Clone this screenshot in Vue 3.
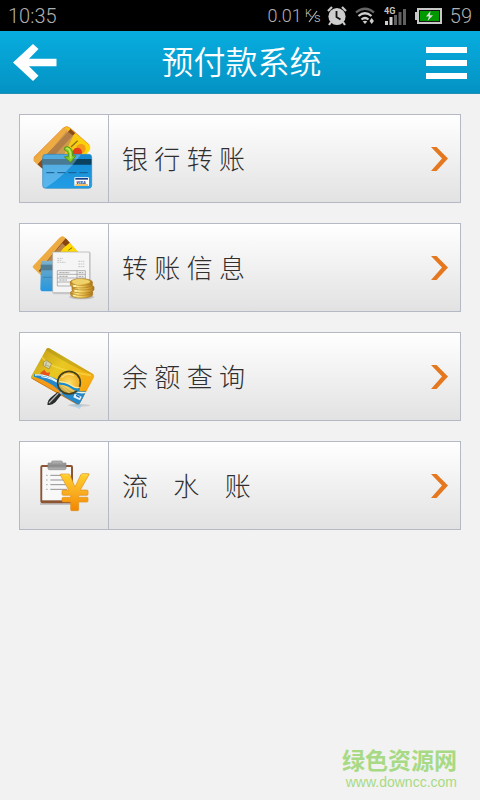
<script setup>
const items = [
  { id: 'transfer', label: '银 行 转 账' },
  { id: 'info', label: '转 账 信 息' },
  { id: 'balance', label: '余 额 查 询' },
  { id: 'ledger', label: '流\u00a0\u00a0\u00a0\u00a0水\u00a0\u00a0\u00a0\u00a0账' },
]
</script>

<template>
  <div class="screen">
    <div class="status">
      <span class="clock">10:35</span>
      <div class="indicators">
        <span class="speed">0.01</span>
        <svg class="unit" width="16" height="18" viewBox="0 0 16 18" aria-label="K/s">
          <text x="0" y="10" font-size="11">K</text>
          <path d="M4 15 12 4" stroke="#b8b8b8" stroke-width="1.2" />
          <text x="9" y="15" font-size="13">s</text>
        </svg>
        <svg class="alarm" width="20" height="20" viewBox="0 0 20 20">
          <path d="M1 5 5 1M19 5 15 1M4 16 2 19M16 16 18 19" stroke="#c9c9c9" stroke-width="2.2" />
          <circle cx="10" cy="10.5" r="8.6" fill="#cecece" />
          <path d="M9.5 5v6l4 2.5" fill="none" stroke="#111" stroke-width="1.8" />
        </svg>
        <svg class="wifi" width="20" height="18" viewBox="0 0 20 18">
          <path d="M1 5.5Q10-2 19 5.5" fill="none" stroke="#656565" stroke-width="2.2" />
          <path d="M3.5 9Q10 3.5 16.5 9M6.5 12.5Q10 9.5 13.5 12.5" fill="none" stroke="#cecece" stroke-width="2.2" />
          <path d="m7.700 14.500 2.300 2.500 2.300-2.500Q10 12.800 7.700 14.500Z" fill="#cecece" />
          <path d="m14.500 14 2.200-3 2.200 3-2.200 3z" fill="#cecece" />
        </svg>
        <svg class="signal" width="23" height="18" viewBox="0 0 23 18">
          <text x="0" y="7" font-size="9" font-weight="700">4G</text>
          <path d="M1 14h3v4H1zM5.500 10h3v8h-3z" fill="#cecece" />
          <path d="M10 8h3v10h-3zM14.500 5h3v13h-3zM19 2h3v16h-3z" fill="#606060" />
        </svg>
        <svg class="battery" width="27" height="16" viewBox="0 0 27 16">
          <path d="M0 4h3v8H0z" fill="#c8c8c8" />
          <rect x="3" y="1" width="23" height="14" fill="#090" stroke="#c8c8c8" stroke-width="2" />
          <rect x="4.500" y="2.500" width="20" height="11" fill="none" stroke="#151515" />
          <path d="m15.500 3-4.500 5.500h3L12.500 13 18 7.200h-3.200z" fill="#ddd" />
        </svg>
        <span class="level">59</span>
      </div>
    </div>

    <header class="header">
      <button class="back" type="button" aria-label="返回">
        <svg width="44" height="38" viewBox="0 0 44 38">
          <path d="M0 18.500 20 0l5.500 5L16 14.700h27.500v7.500H16l9.500 9.600-5.500 5.200z" fill="#fff" />
        </svg>
      </button>
      <h1>预付款系统</h1>
      <button class="menu" type="button" aria-label="菜单">
        <span></span><span></span><span></span>
      </button>
    </header>

    <main class="list">
      <a v-for="item in items" :key="item.id" class="item" href="#">
        <span class="icon">
          <svg v-if="item.id === 'transfer'" width="88" height="87" viewBox="30 30 264 261">
            <defs>
              <linearGradient id="gold" x1="0" y1="0.5" x2="1" y2="0.5">
                <stop offset="0" stop-color="#e89a3a" /><stop offset="0.45" stop-color="#e5ae62" /><stop offset="0.55" stop-color="#f6c21c" /><stop offset="1" stop-color="#ffdc00" />
              </linearGradient>
              <linearGradient id="blue" x1="0" y1="0" x2="0" y2="1">
                <stop offset="0" stop-color="#1488cf" /><stop offset="1" stop-color="#229ee6" />
              </linearGradient>
              <clipPath id="goldClip"><path d="M72 157 160 69Q170 60 180 69L238 120Q245 128 238 137L180 205 98 192 72 169Q68 163 72 157Z" /></clipPath>
              <clipPath id="blueClip"><rect x="98" y="148" width="147" height="102" rx="9" /></clipPath>
            </defs>
            <g clip-path="url(#goldClip)">
              <path d="M60 55h195v155H60z" fill="url(#gold)" />
              <path d="m67 167 96-100 12 10-88 105z" fill="#efab43" />
              <path d="m80 181 90-96 14-16 14 13-105 113z" fill="#8d4c17" />
              <path d="m112 148 58-70 20 14-28 58z" fill="#c08f55" opacity=".75" />
              <path d="m183 126 20-19" stroke="#8d741a" stroke-width="4" />
              <circle cx="213" cy="131" r="14" fill="#f39a18" />
              <circle cx="202" cy="142" r="14" fill="#e53b1c" />
            </g>
            <path d="M72 157 160 69Q170 60 180 69L238 120" fill="none" stroke="#ed9c30" stroke-width="3" />
            <g clip-path="url(#blueClip)">
              <path d="M97 147h150v105H97z" fill="url(#blue)" />
              <path d="M97 162h150v17H97z" fill="#09415f" />
              <path d="M97 147h117Q170 208 105 250h-8z" fill="#c7eaff" opacity=".34" />
              <path d="M109 203h24m9 0h24m9 0h24m9 0h25" stroke="#175c8c" stroke-width="3" />
            </g>
            <rect x="98" y="148" width="147" height="102" rx="9" fill="none" stroke="#3189ba" stroke-width="2" />
            <rect x="193" y="217" width="44" height="26" rx="2" fill="#fff" />
            <path d="M196 219h38v5h-38z" fill="#183f8d" /><path d="M196 238h38v4h-38z" fill="#f0a11f" />
            <text x="199" y="237" font-size="13" font-weight="900" font-style="italic" fill="#263e91">VISA</text>
            <path d="M163 134Q162 124 172 125 190 128 188 153l10-1-16 20-19-16 12-1Q178 140 163 134Z" fill="#83cb26" stroke="#559715" stroke-width="3" />
            <path d="M168 131q5-3 10 4 5 8 4 26" fill="none" stroke="#bfe95c" stroke-width="5" />
          </svg>

          <svg v-else-if="item.id === 'info'" width="88" height="87" viewBox="30 27 264 261">
            <defs>
              <linearGradient id="cardBlue" x1="0" y1="0" x2="0" y2="1">
                <stop stop-color="#80b4ce" /><stop offset=".3" stop-color="#5da5cd" /><stop offset="1" stop-color="#2697de" />
              </linearGradient>
              <linearGradient id="coin" x1="0" y1="0" x2="1" y2="0">
                <stop stop-color="#bf8a26" /><stop offset=".3" stop-color="#ffe883" /><stop offset=".6" stop-color="#e8bd4c" /><stop offset="1" stop-color="#ad7718" />
              </linearGradient>
            </defs>
            <path d="m69 153 78-83q9-10 17-3l43 47-88 68H94l-23-22q-4-4-2-7Z" fill="#edab42" />
            <path d="m86 168 81-98 14 15-76 91z" fill="#854412" />
            <path d="m112 137 45-52 13 12-27 44z" fill="#c79557" opacity=".8" />
            <path d="m160 100 19-17 27 30h-57z" fill="#ffd900" />
            <path d="m175 106 11-8" stroke="#776b14" stroke-width="3" />
            <path d="M93 142q0-5 6-5h40v92h-39q-9 0-9-8z" fill="url(#cardBlue)" />
            <path d="M92 149h38v17H92z" fill="#4b7388" opacity=".8" />
            <path d="M99 187h28" stroke="#347aa0" stroke-width="2" />
            <path d="M130 113h112v125H130z" fill="#aaa" opacity=".5" />
            <path d="M128 111h111v122H128z" fill="#f5f5f5" stroke="#aaa" stroke-width="2" />
            <path d="M142 130h17m-17 6h12m-12 6h24m39-3h18m-18 8h18m-18 8h18" stroke="#aaa" stroke-width="2" stroke-dasharray="5 2" />
            <path d="M142 167h84v46h-84zM142 178h84m-84 11h84m-84 12h84M201 167v46" fill="none" stroke="#909090" stroke-width="2" />
            <path d="M148 173h30m-30 11h27m-27 11h23m35-22h14m-14 11h14" stroke="#777" stroke-width="2" stroke-dasharray="7 2" />
            <ellipse cx="215" cy="246" rx="37" ry="7" fill="#777" opacity=".35" />
            <g fill="url(#coin)" stroke="#ad7a20" stroke-width="2">
              <path d="M182 232v8c4 12 60 12 66 0v-8z" /><ellipse cx="215" cy="232" rx="33" ry="9" />
              <path d="M186 216v9c4 12 60 12 66 0v-9z" /><ellipse cx="219" cy="216" rx="33" ry="9" />
              <path d="M181 201v9c4 12 60 12 66 0v-9z" /><ellipse cx="214" cy="201" rx="33" ry="10" />
            </g>
            <ellipse cx="213" cy="200" rx="27" ry="7" fill="#efd269" />
            <path d="M194 210v6m3 9v5m-4 9v5" stroke="#fff2ac" stroke-width="8" />
          </svg>

          <svg v-else-if="item.id === 'balance'" width="88" height="87" viewBox="30 24 264 261">
            <defs>
              <linearGradient id="bank" x1="0" y1="0" x2="1" y2="1">
                <stop stop-color="#b98f16" /><stop offset=".4" stop-color="#e8c822" /><stop offset=".72" stop-color="#f6ac13" /><stop offset="1" stop-color="#f07b13" />
              </linearGradient>
              <radialGradient id="lens"><stop stop-color="#ffe16e" /><stop offset="1" stop-color="#efad24" stop-opacity=".75" /></radialGradient>
              <clipPath id="bankClip"><path d="M109 72q3-5 9-2l131 77q6 4 3 10l-42 78q-3 6-9 3L66 161q-5-3-2-8z" /></clipPath>
            </defs>
            <ellipse cx="207" cy="241" rx="34" ry="4" fill="#aaa" opacity=".45" />
            <path d="m178 238 31 15 9-15z" fill="#8ac8e6" opacity=".45" />
            <g clip-path="url(#bankClip)">
              <path d="M55 60h205v190H55z" fill="url(#bank)" />
              <path d="M104 73q80 53 144 76l5-12-125-75z" fill="#a99115" opacity=".45" />
              <path d="M90 88q17 28 50 39 42 15 103 24" fill="none" stroke="#f8e052" stroke-width="5" opacity=".6" />
              <path d="m91 143 12-9 7 9 10-1-4 15-20 2z" fill="#e95319" />
              <path d="M66 160q50-4 75 14 20 14 45 35l-20 22z" fill="#f39a18" />
              <path d="M72 148q42 0 67 14 31 21 52 32 18 8 38 4l-20 47-46-30Q132 172 72 155z" fill="#2588c9" />
              <path d="M75 150q34-2 62 16 34 23 53 32 19 8 39 4" fill="none" stroke="#eef5e6" stroke-width="4" />
              <path d="M94 155q35 4 57 25 14 13 29 25" fill="none" stroke="#fff" stroke-width="3" />
              <path d="m194 206 21 9-5 11-20-9z" fill="#e9f4fa" /><path d="m198 211 11 6" stroke="#176eb6" stroke-width="4" />
            </g>
            <path d="M64 159 202 238" stroke="#b96a18" stroke-width="2" />
            <path d="m100 112 9-6 16 10-8 16-17-10z" fill="#d6d4a8" stroke="#96832e" stroke-width="2" />
            <path d="M105 119l14 6m-9-15-4 13" stroke="#8e998b" stroke-width="2" />
            <path d="m146 212 12-14" stroke="#aab5bc" stroke-width="6" />
            <path d="m143 201 11 8-18 23q-11 10-24 7 0-15 16-26z" fill="#292b2a" />
            <path d="m145 205-20 21-8 8" stroke="#aeb3b0" stroke-width="4" fill="none" />
            <circle cx="177" cy="173" r="34" fill="url(#lens)" stroke="#44401e" stroke-width="5" />
            <path d="M146 176q21-2 39 11 10 9 24 7" fill="none" stroke="#168bd1" stroke-width="7" />
            <path d="M148 169q23 3 38 13 10 8 23 5" fill="none" stroke="#f7e89f" stroke-width="4" />
            <path d="M155 158q15-18 37-6" fill="none" stroke="#fff0a2" stroke-width="4" opacity=".7" />
          </svg>

          <svg v-else width="88" height="87" viewBox="30 21 264 261">
            <defs>
              <linearGradient id="yen" x1="0" y1="0" x2="0" y2="1">
                <stop stop-color="#ffd02b" /><stop offset=".5" stop-color="#faae20" /><stop offset="1" stop-color="#f28600" />
              </linearGradient>
              <linearGradient id="clip" x1="0" y1="0" x2="0" y2="1">
                <stop stop-color="#bababa" /><stop offset=".55" stop-color="#888" /><stop offset="1" stop-color="#bbb" />
              </linearGradient>
            </defs>
            <path d="M90 204h100v6H90z" fill="#999" opacity=".5" />
            <rect x="94" y="93" width="92" height="109" rx="3" fill="#f4f4f4" stroke="#8b5533" stroke-width="6" />
            <path d="M93 200h94" stroke="#8b5533" stroke-width="8" />
            <path d="M98 97h84v98H98z" fill="#f8f8f8" />
            <path d="M108 121h5m-5 14h5m-5 14h5m-5 14h5" stroke="#a9a9a9" stroke-width="3" />
            <path d="M121 121h50m-50 14h50m-50 14h50m-50 14h50" stroke="#929292" stroke-width="3" />
            <path d="M114 84h11v-3q0-3 3-3h26q3 0 3 3v3h11v16q0 4-5 4h-45q-4 0-4-4z" fill="url(#clip)" stroke="#858585" stroke-width="2" />
            <path d="M154 117h22q3 0 4 3l15 36 17-36q2-4 5-4h19q2 0 1 3l-26 46h20q3 0 3 3v10q0 3-3 3h-25v6h25q3 0 3 3v8q0 3-3 3h-25v23q0 3-3 3h-18q-3 0-3-3v-23h-22q-4 0-4-3v-8q0-3 4-3h22v-6h-22q-4 0-4-3v-10q0-3 4-3h16l-25-45q-1-3 2-3Z" fill="url(#yen)" stroke="#e08f1e" stroke-width="2" />
            <path d="M159 120h16m39 0h18" stroke="#ffe25d" stroke-width="2" />
          </svg>
        </span>
        <span class="label">{{ item.label }}</span>
        <svg class="chevron" width="18" height="26" viewBox="0 0 18 26">
          <path d="M0 1h5.500L17 12.500 5.500 25H0l11-12.500z" fill="#e5771f" />
        </svg>
      </a>
    </main>

    <footer class="brand">
      <strong>绿色资源网</strong>
      <span>www.downcc.com</span>
    </footer>
  </div>
</template>

<style>
body {
  background: #f2f2f2;
}
</style>

<style scoped>
.screen {
  display: flex;
  flex-direction: column;
  min-height: 100vh;
  background: #f2f2f2;
  font-family: Roboto, "Noto Sans CJK SC", sans-serif;
}
.status {
  display: flex;
  align-items: center;
  justify-content: space-between;
  height: 31px;
  padding: 0 8px;
  background: #000;
  color: #b0b0b0;
  font-size: 20px;
  font-weight: 350;
  line-height: 32px;
}
.status text {
  fill: #c4c4c4;
}
.indicators {
  display: flex;
  align-items: center;
}
.speed {
  font-size: 18px;
}
.unit {
  margin-left: 3px;
}
.alarm {
  margin-left: 6px;
}
.wifi {
  margin-left: 8px;
}
.signal {
  margin-left: 9px;
}
.battery {
  margin-left: 8px;
}
.level {
  margin-left: 8px;
}
.header {
  display: flex;
  align-items: center;
  justify-content: space-between;
  box-sizing: border-box;
  height: 63px;
  padding: 2px 13px 0;
  border-bottom: 1px solid #238fb4;
  background: linear-gradient(#07addf, #0493c3);
  color: #fff;
}
.header h1 {
  margin: 0;
  font-size: 32px;
  font-weight: 350;
  line-height: 60px;
}
.back,
.menu {
  display: flex;
  padding: 0;
  border: 0;
  background: none;
}
.menu {
  flex-direction: column;
  gap: 7px;
}
.menu span {
  width: 41px;
  height: 6px;
  background: #fff;
}
.list {
  display: flex;
  flex-direction: column;
  gap: 20px;
  padding: 20px 19px;
}
.item {
  display: flex;
  align-items: center;
  border: 1px solid #b5b9c5;
  background: linear-gradient(#fff, #e2e2e3);
  color: #303030;
  text-decoration: none;
}
.icon {
  display: flex;
  border-right: 1px solid #b5b9c5;
}
.label {
  flex: 1;
  padding-top: 2px;
  padding-left: 13px;
  font-size: 26px;
  font-weight: 300;
  line-height: 36px;
}
.chevron {
  margin-right: 11px;
}
.brand {
  display: flex;
  flex-direction: column;
  align-items: flex-end;
  margin-top: auto;
  padding: 0 23px 10px 0;
  color: #a8da85;
}
.brand strong {
  font-size: 23px;
  font-weight: 700;
  line-height: 24px;
}
.brand span {
  font-family: "Liberation Sans", sans-serif;
  font-size: 14px;
  line-height: 16px;
}
</style>
